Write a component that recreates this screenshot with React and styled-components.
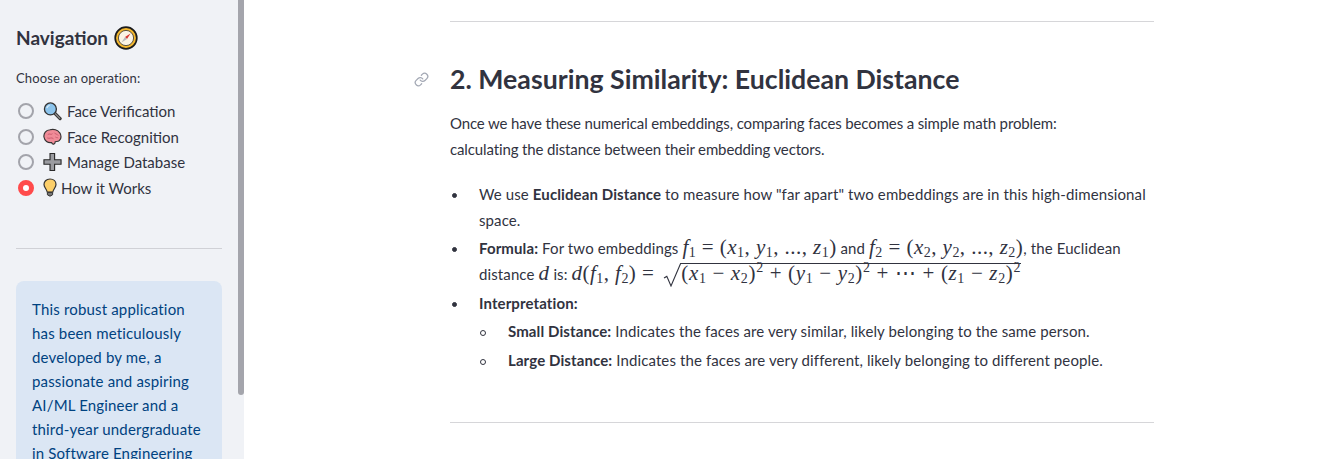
import React from 'react'
import styled, { createGlobalStyle } from 'styled-components'
import { Link } from 'lucide-react'

const GlobalStyle = createGlobalStyle`
    html, body {
        margin: 0;
        padding: 0;
        height: 100%;
        overflow: hidden;
        background: #ffffff;
    }
    body {
        font-family: Lato, "Liberation Sans", sans-serif;
        color: #31333f;
    }
`

const Page = styled.div`
    display: flex;
    height: 459px;
    overflow: hidden;
`

const Sidebar = styled.aside`
    position: relative;
    flex: 0 0 244px;
    box-sizing: border-box;
    padding: 26px 22px 0 16px;
    background: #f0f2f6;
    overflow: hidden;
`

const ScrollThumb = styled.div`
    position: absolute;
    top: 0;
    right: 0;
    width: 6px;
    height: 395px;
    background: #a4a5ac;
    border-radius: 0 0 3px 3px;
`

const SideTitle = styled.h2`
    display: flex;
    align-items: center;
    gap: 6px;
    margin: 0 0 19px;
    font-size: 19px;
    line-height: 24px;
    font-weight: 700;
`

const RadioLabel = styled.div`
    font-size: 13px;
    line-height: 18px;
    letter-spacing: 0.13px;
    margin-bottom: 11.5px;
`

const RadioList = styled.div`
    display: flex;
    flex-direction: column;
`

const RadioRow = styled.div`
    display: flex;
    align-items: center;
    height: 25.6px;
    font-size: 15px;
    padding-left: 2px;
`

const RadioDot = styled.span`
    box-sizing: border-box;
    flex: none;
    width: 16px;
    height: 16px;
    margin-right: 9px;
    border-radius: 50%;
    background: ${(p) => (p.$on ? '#ffffff' : 'transparent')};
    border: ${(p) => (p.$on ? '5px solid #ff4b4b' : '2px solid #a3a4ab')};
`

const Emoji = styled.svg`
    flex: none;
    width: ${(p) => p.$w || 20}px;
    height: ${(p) => p.$h || 20}px;
    margin-right: ${(p) => p.$gap ?? 5}px;
`

const SideRule = styled.hr`
    border: 0;
    border-top: 1px solid #d0d1d6;
    margin: 47.5px 0 32px;
`

const InfoBox = styled.div`
    padding: 16px;
    height: 300px;
    box-sizing: border-box;
    background: #dbe6f4;
    border-radius: 8px 8px 0 0;
    color: #004280;
    font-size: 15px;
    line-height: 24px;
    letter-spacing: 0.17px;
`

const Main = styled.main`
    flex: 1;
    padding-left: 206px;
`

const Content = styled.div`
    width: 704px;
`

const Rule = styled.hr`
    border: 0;
    border-top: 1px solid #d6d6d9;
    margin: ${(p) => p.$margin};
`

const Heading = styled.h2`
    position: relative;
    margin: 0 0 13px;
    font-size: 26.7px;
    line-height: 38px;
    font-weight: 700;
`

const Anchor = styled.span`
    position: absolute;
    left: -36px;
    top: 12px;
    display: flex;
    color: #a3a8b4;
`

const Para = styled.p`
    margin: 0 0 20px;
    font-size: 15px;
    line-height: 25.6px;
    letter-spacing: -0.13px;
`

const Bullets = styled.ul`
    margin: ${(p) => (p.$nested ? '3px 0 0' : '0')};
    padding: 0 0 0 29px;
    font-size: 15px;
    line-height: 25.6px;
    letter-spacing: 0.11px;
    list-style: none;
`

const Item = styled.li`
    position: relative;
    margin: 0 0 3px;

    &::before{
        content: "";
        position: absolute;
        left: ${(p) => (p.$hollow ? '-28px' : '-27px')};
        top: 11px;
        box-sizing: border-box;
        width: ${(p) => (p.$hollow ? '6px' : '5px')};
        height: ${(p) => (p.$hollow ? '6px' : '5px')};
        border-radius: 50%;
        background: ${(p) => (p.$hollow ? 'transparent' : '#31333f')};
        border: 1px solid #31333f;
    }
`

const MathText = styled.span`
    font-family: "Liberation Serif", serif;
    font-size: 21px;
    letter-spacing: 0.45px;
    white-space: nowrap;
    line-height: 1;
`

const V = styled.i`
    font-style: italic;
`

const Sub = styled.sub`
    font-size: 14px;
    line-height: 0;
    vertical-align: -3px;
`

const Sup = styled.sup`
    font-size: 14px;
    line-height: 0;
    vertical-align: 8px;
`

const Radicand = styled.span`
    position: relative;
    display: inline-block;
    margin-left: 27px;
    border-top: 1px solid #31333f;
    line-height: 19px;
    letter-spacing: 0.65px;
    white-space: nowrap;
`

const Radical = styled.svg`
    position: absolute;
    left: -18px;
    top: -1px;
    width: 18px;
    height: 24px;
`

const Compass = () => (
    <Emoji viewBox="0 0 24 24" $w={24} $h={24} $gap={0}>
        <circle cx="12" cy="12" r="10.8" fill="#f5b82e" stroke="#1c1c1c" strokeWidth="1.7" />
        <circle cx="12" cy="12" r="7.6" fill="#fbf3e4" stroke="#333" strokeWidth="0.8" />
        <path d="M16.5 7.5 L13 13 L11 11 Z" fill="#d8322f" />
        <path d="M7.5 16.5 L11 11 L13 13 Z" fill="#b8b8bc" />
    </Emoji>
)

const Magnifier = () => (
    <Emoji viewBox="0 0 20 20" $w={19}>
        <path d="M12 12 L18 18" stroke="#333" strokeWidth="3.4" strokeLinecap="round" />
        <path d="M12.4 12.4 L17.6 17.6" stroke="#888" strokeWidth="1.4" strokeLinecap="round" />
        <circle cx="7.8" cy="7.8" r="6.3" fill="#8cc4ec" stroke="#333" strokeWidth="1.4" />
        <path d="M4 7 A4 4 0 0 1 7 4" stroke="#d6ecfa" strokeWidth="1.4" fill="none" />
    </Emoji>
)

const Brain = () => (
    <Emoji viewBox="0 0 20 20" $w={19}>
        <path d="M1 10 C0.5 6 3 2.6 7.5 2.4 C11 1.2 15.5 2.4 17.5 5.5 C19.5 8 19.4 12 17.4 13.5 C15.5 15.2 14 14.4 12.8 15 C13 17.8 10 18.6 9 15.8 C5 16.4 1.6 14.2 1 10 Z" fill="#f08c98" stroke="#333" strokeWidth="1.2" />
        <path d="M5 7.5 C7 5.5 8 8.5 10 6.5 M12 5.5 C13 7.5 15 6.5 16 8.5 M4.5 11 C7 12.2 9 9.8 11 11.8 M13 10 C14 11 15 10.4 16 11" stroke="#c4566a" strokeWidth="0.9" fill="none" />
    </Emoji>
)

const Plus = () => (
    <Emoji viewBox="0 0 20 20" $w={19}>
        <path d="M7.4 1 H12.2 V7.6 H19 V12.4 H12.2 V19 H7.4 V12.4 H1 V7.6 H7.4 Z" fill="#9a9ba0" stroke="#2a2a2a" strokeWidth="1.2" />
    </Emoji>
)

const Bulb = () => (
    <Emoji viewBox="0 0 14 20" $w={14} $gap={4}>
        <path d="M7 1 C3 1 1 3.8 1 6.6 C1 9.5 3.6 11 4.2 14 H9.8 C10.4 11 13 9.5 13 6.6 C13 3.8 11 1 7 1 Z" fill="#fccf6a" stroke="#333" strokeWidth="1.2" />
        <path d="M4.4 14.4 H9.6 V16.8 Q7 19.6 4.4 16.8 Z" fill="#777" stroke="#333" strokeWidth="1" />
    </Emoji>
)

const options = [
    { label: 'Face Verification', icon: <Magnifier /> },
    { label: 'Face Recognition', icon: <Brain /> },
    { label: 'Manage Database', icon: <Plus /> },
    { label: 'How it Works', icon: <Bulb />, on: true },
]

export default function App() {
    return (
        <Page>
            <GlobalStyle />
            <Sidebar>
                <SideTitle>Navigation <Compass /></SideTitle>
                <RadioLabel>Choose an operation:</RadioLabel>
                <RadioList>
                    {options.map((o) => (
                        <RadioRow key={o.label}>
                            <RadioDot $on={o.on} />
                            {o.icon}
                            {o.label}
                        </RadioRow>
                    ))}
                </RadioList>
                <SideRule />
                <InfoBox>
                    This robust application has been meticulously developed by me, a passionate and aspiring AI/ML Engineer and a third-year undergraduate in Software Engineering
                </InfoBox>
                <ScrollThumb />
            </Sidebar>
            <Main>
                <Content>
                    <Rule $margin="21px 0 38px" />
                    <Heading>
                        <Anchor><Link size={15} strokeWidth={2} /></Anchor>
                        2. Measuring Similarity: Euclidean Distance
                    </Heading>
                    <Para>
                        Once we have these numerical embeddings, comparing faces becomes a simple math problem:<br />
                        calculating the distance between their embedding vectors.
                    </Para>
                    <Bullets>
                        <Item>
                            We use <b>Euclidean Distance</b> to measure how "far apart" two embeddings are in this high-dimensional space.
                        </Item>
                        <Item>
                            <b>Formula:</b> For two embeddings{' '}
                            <MathText><V>f</V><Sub>1</Sub> = (<V>x</V><Sub>1</Sub>, <V>y</V><Sub>1</Sub>, ..., <V>z</V><Sub>1</Sub>)</MathText>{' '}
                            and{' '}
                            <MathText><V>f</V><Sub>2</Sub> = (<V>x</V><Sub>2</Sub>, <V>y</V><Sub>2</Sub>, ..., <V>z</V><Sub>2</Sub>)</MathText>
                            , the Euclidean<br />distance <MathText><V>d</V></MathText> is:{' '}
                            <MathText>
                                <V>d</V>(<V>f</V><Sub>1</Sub>, <V>f</V><Sub>2</Sub>) =
                                <Radicand>
                                    <Radical viewBox="0 0 18 24">
                                        <path d="M1 15 L3.8 13.4 L8 23 L17.6 0.5 H18" fill="none" stroke="#31333f" strokeWidth="1.1" />
                                    </Radical>
                                    (<V>x</V><Sub>1</Sub> − <V>x</V><Sub>2</Sub>)<Sup>2</Sup> + (<V>y</V><Sub>1</Sub> − <V>y</V><Sub>2</Sub>)<Sup>2</Sup> + ⋯ + (<V>z</V><Sub>1</Sub> − <V>z</V><Sub>2</Sub>)<Sup>2</Sup>
                                </Radicand>
                            </MathText>
                        </Item>
                        <Item>
                            <b>Interpretation:</b>
                            <Bullets $nested>
                                <Item $hollow><b>Small Distance:</b> Indicates the faces are very similar, likely belonging to the same person.</Item>
                                <Item $hollow><b>Large Distance:</b> Indicates the faces are very different, likely belonging to different people.</Item>
                            </Bullets>
                        </Item>
                    </Bullets>
                    <Rule $margin="49px 0 0" />
                </Content>
            </Main>
        </Page>
    )
}
